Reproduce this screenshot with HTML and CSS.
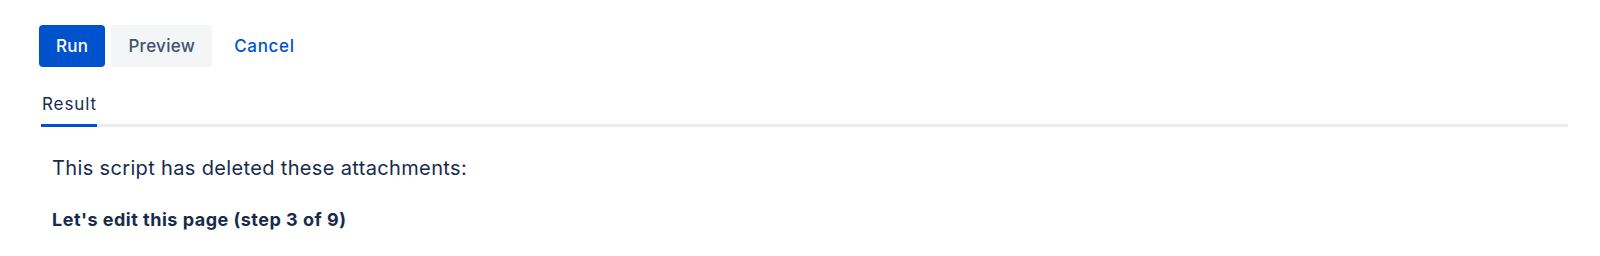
FILE: index.html
```html
<!DOCTYPE html>
<html lang="en">
<head>
  <meta charset="UTF-8" />
  <title>Script console</title>
  <link rel="stylesheet" href="styles.css">
</head>
<body>
  <div class="console">
    <div class="toolbar">
      <button class="btn btn-primary">Run</button>
      <button class="btn btn-default">Preview</button>
      <button class="btn btn-link">Cancel</button>
    </div>

    <div class="tabs">
      <div class="tab active">Result</div>
    </div>

    <div class="result">
      <p class="intro">This script has deleted these attachments:</p>
      <h4 class="page-title">Let's edit this page (step 3 of 9)</h4>
    </div>
  </div>
</body>
</html>
```

FILE: styles.css
```css
body {
  margin: 0;
  padding: 0;
  font-family: Inter, "Noto Sans", sans-serif;
  color: #172B4D;
  background: #fff;
}

.console {
  padding: 25px 32px 0 39px;
}

.toolbar {
  display: flex;
  gap: 6px;
  align-items: center;
}

.btn {
  height: 42px;
  padding: 0 17px;
  border: none;
  border-radius: 4px;
  font-family: inherit;
  font-size: 17px;
  font-weight: 500;
  letter-spacing: 0.3px;
  cursor: pointer;
}

.btn-primary {
  background-color: #0052CC;
  color: #fff;
}

.btn-default {
  background-color: #F4F5F7;
  color: #42526E;
}

.btn-link {
  padding: 0 16px;
  letter-spacing: 0.7px;
  background: none;
  color: #0052CC;
}

.tabs {
  display: flex;
  margin-top: 27px;
  margin-left: 2px;
  border-bottom: 3px solid #EBECF0;
}

.tab {
  font-size: 17px;
  letter-spacing: 0.9px;
  padding: 0 0 10px 1px;
  margin-bottom: -3px;
  color: #172B4D;
}

.tab.active {
  border-bottom: 3px solid #0052CC;
}

.result {
  padding: 29px 13px 0;
}

.intro {
  margin: 0;
  font-size: 20px;
  letter-spacing: 0.35px;
}

.page-title {
  margin: 29px 0 0;
  font-size: 18px;
  font-weight: 700;
  letter-spacing: 0.5px;
}
```
